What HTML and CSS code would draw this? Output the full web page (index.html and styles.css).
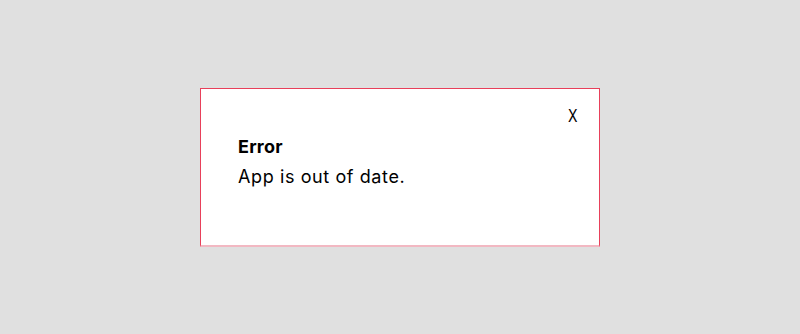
FILE: index.html
```html
<!DOCTYPE html>
<html>
<head>
<meta charset="utf-8">
<link rel="stylesheet" href="styles.css">
</head>
<body>
<div class="stage">
  <div class="toast">
    <button class="close">X</button>
    <div class="content">
      <div class="title">Error</div>
      <div class="message">App is out of date.</div>
    </div>
  </div>
</div>
</body>
</html>
```
FILE: styles.css
```css
html, body {
  margin: 0;
  padding: 0;
  background: #e0e0e0;
  font-family: "Inter", "Noto Sans", sans-serif;
}
.stage {
  width: 800px;
  height: 334px;
  display: flex;
  align-items: center;
  justify-content: center;
}
.toast {
  position: relative;
  box-sizing: border-box;
  width: 400px;
  height: 159px;
  background: #fff;
  border: 1px solid #e8405a;
  border-bottom: 2px solid #f2b8c2;
  padding: 45px 37px 0;
}
.close {
  position: absolute;
  top: 17px;
  right: 20px;
  background: none;
  border: none;
  padding: 0;
  font-family: "Inter", sans-serif;
  font-size: 17px;
  line-height: 20px;
  color: #000;
  transform: scaleX(0.82);
}
.title {
  font-weight: 700;
  font-size: 18px;
  line-height: 26px;
  letter-spacing: 0.2px;
  color: #000;
}
.message {
  font-size: 18px;
  line-height: 34px;
  letter-spacing: 0.6px;
  color: #000;
}
```
